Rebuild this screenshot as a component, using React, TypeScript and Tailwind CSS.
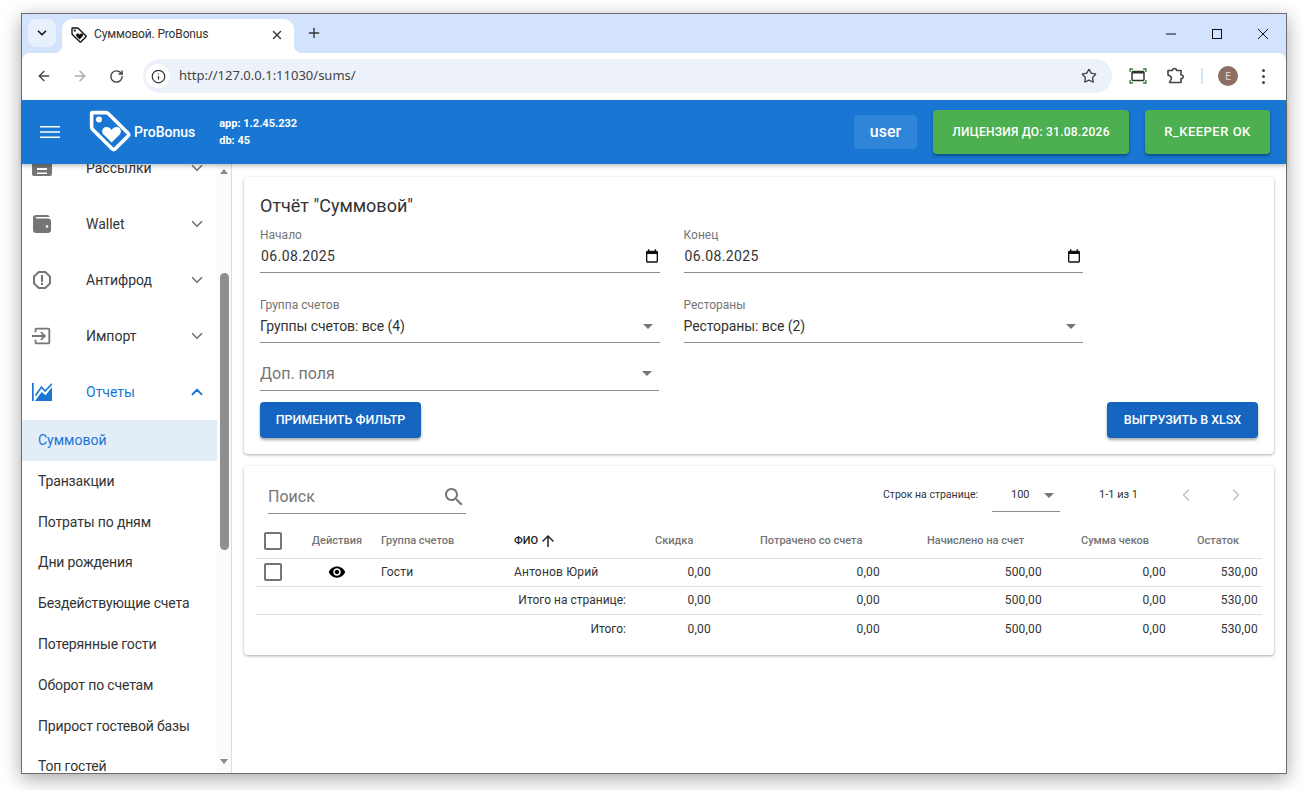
import React from "react";
import { ArrowLeft, ArrowRight, RotateCw, Info, Star, ChevronDown, ChevronUp, ChevronLeft, ChevronRight, Plus, X } from "lucide-react";

const TagLogo = ({ className }: { className: string }) => (
  <svg viewBox="0 0 40 40" className={className}>
    <path d="M2.5 3.5 Q2.5 2.5 3.5 2.5 L16 2.5 Q17.5 2.5 18.5 3.5 L37 22 Q38.5 23.5 37 25 L25 37 Q23.5 38.5 22 37 L3.5 18.5 Q2.5 17.5 2.5 16 Z" fill="none" stroke="currentColor" strokeWidth="3.4" strokeLinejoin="round" />
    <circle cx="9.5" cy="9" r="2.9" fill="currentColor" />
    <path d="M21.5 31 L13.8 23.3 C11.5 20.8 12.6 16.6 16.2 16.2 C18.4 16 20.4 17.2 21.5 19 C22.6 17.2 24.6 16 26.8 16.2 C30.4 16.6 31.5 20.8 29.2 23.3 Z" fill="currentColor" />
  </svg>
);

const Caret = ({ className = "" }: { className?: string }) => (
  <svg viewBox="0 0 10 5" className={`w-[10px] h-[5px] ${className}`}><path d="M0 0h10L5 5z" fill="#757575" /></svg>
);

const Calendar = () => (
  <svg viewBox="0 0 24 24" className="w-[16px] h-[16px] text-[#111]"><path fill="currentColor" d="M19 4h-1V2h-2v2H8V2H6v2H5c-1.1 0-2 .9-2 2v14c0 1.1.9 2 2 2h14c1.1 0 2-.9 2-2V6c0-1.1-.9-2-2-2zm0 16H5V9h14v11z" /></svg>
);

const NewsIcon = () => (
  <svg viewBox="0 0 20 20" className="w-[20px] h-[20px] text-[#757575]"><path fill="currentColor" fillRule="evenodd" d="M2 2h2V0h12v2h2a2 2 0 0 1 2 2v14a2 2 0 0 1-2 2H2a2 2 0 0 1-2-2V4a2 2 0 0 1 2-2zm3 10v2h10v-2zm0 4.5V18h10v-1.5z" /></svg>
);
const WalletIcon = () => (
  <svg viewBox="0 0 20 20" className="w-[20px] h-[20px] text-[#757575]"><path fill="currentColor" fillRule="evenodd" d="M4 1h11a3 3 0 0 1 2.8 2H4.5a.8.8 0 0 0 0 1.6H16a3 3 0 0 1 3 3V16a3 3 0 0 1-3 3H4a3 3 0 0 1-3-3V4a3 3 0 0 1 3-3zm11 10.2a1.3 1.3 0 1 0 0 2.6 1.3 1.3 0 0 0 0-2.6z" /></svg>
);
const FraudIcon = () => (
  <svg viewBox="0 0 24 24" className="w-[24px] h-[24px] text-[#757575]"><path fill="currentColor" d="M15.73 3H8.27L3 8.27v7.46L8.27 21h7.46L21 15.73V8.27L15.73 3zM19 14.9 14.9 19H9.1L5 14.9V9.1L9.1 5h5.8L19 9.1v5.8zM11 7h2v7h-2zM11 15h2v2h-2z" /></svg>
);
const ImportIcon = () => (
  <svg viewBox="0 0 24 24" className="w-[22px] h-[22px] -ml-[1px] text-[#757575]"><path fill="currentColor" d="M10.09 15.59 11.5 17l5-5-5-5-1.41 1.41L12.67 11H1v2h11.67l-2.58 2.59zM19 3H6c-1.11 0-2 .9-2 2v3h2V5h13v14H6v-3H4v3c0 1.1.89 2 2 2h13c1.1 0 2-.9 2-2V5c0-1.1-.9-2-2-2z" /></svg>
);
const ChartIcon = () => (
  <svg viewBox="0 0 20 18" className="w-[20px] h-[18px] text-[#1976d2]">
    <path fill="currentColor" d="M0 0h1.7v18H0zM3 18l6.7-9 4 3.3L20 4v14z" />
    <path fill="none" stroke="currentColor" strokeWidth="1.6" d="M3.5 12.5l6-8.5 3.6 4L20 .8" />
  </svg>
);

const TopItem = ({ icon, label, active }: { icon: React.ReactNode; label: string; active?: boolean }) => (
  <div className={`h-[56px] flex items-center pl-[8px] pr-[11px] text-[14px] ${active ? "text-[#1976d2]" : "text-[#333]"}`}>
    <div className="w-[24px] flex justify-center">{icon}</div>
    <div className="ml-[32px] flex-1">{label}</div>
    {active ? <ChevronUp size={18} strokeWidth={2.4} className="text-[#1976d2]" /> : <ChevronDown size={18} strokeWidth={2.2} className="text-[#757575]" />}
  </div>
);

const subs = ["Транзакции", "Потраты по дням", "Дни рождения", "Бездействующие счета", "Потерянные гости", "Оборот по счетам", "Прирост гостевой базы", "Топ гостей"];

const Field = ({ label, value, right, date }: { label: string; value: string; right: React.ReactNode; date?: boolean }) => (
  <div className="flex-1 h-[45px] border-b border-[#8c8c8c] flex flex-col">
    <div className="text-[12px] leading-[14px] text-[#757575]">{label}</div>
    <div className="flex items-center justify-between mt-[4px] text-[14px] leading-[20px] text-[#333]">
      <span className={date ? "ml-[1px] tracking-[0.4px]" : "tracking-[-0.08px]"}>{value}</span>
      {right}
    </div>
  </div>
);

const Check = () => <div className="w-[18px] h-[18px] border-2 border-[#757575] rounded-[2px] ml-[8px]" />;

const Num = ({ v }: { v: string }) => <td className="text-right pr-[4px] text-[12px] tracking-[0.2px] text-[#333]">{v}</td>;

const amounts = ["0,00", "0,00", "500,00", "0,00", "530,00"];

export default function App() {
  return (
    <div className="w-[1303px] h-[790px] bg-white overflow-hidden pl-[21px] pt-[13px]" style={{ fontFamily: "Roboto, 'Liberation Sans', sans-serif" }}>
      <div className="w-[1266px] h-[761px] border border-[#6e6e6e] shadow-[0_5px_18px_rgba(0,0,0,0.35)] flex flex-col bg-white">
        {/* tab strip */}
        <div className="h-[39px] bg-[#d3e3fd] flex items-end shrink-0 relative">
          <div className="w-[28px] h-[28px] mb-[6px] ml-[6px] bg-[#e9f0fd] rounded-[8px] flex items-center justify-center">
            <ChevronDown size={14} strokeWidth={3} className="text-[#1f1f1f]" />
          </div>
          <div className="w-[232px] h-[34px] ml-[6px] bg-white rounded-t-[10px] flex items-center pl-[9px] pr-[10px] relative">
            <span className="absolute left-[-8px] bottom-0 w-[8px] h-[8px] bg-[radial-gradient(circle_at_0_0,#d3e3fd_8px,#ffffff_8.5px)]" />
            <span className="absolute right-[-8px] bottom-0 w-[8px] h-[8px] bg-[radial-gradient(circle_at_100%_0,#d3e3fd_8px,#ffffff_8.5px)]" />
            <TagLogo className="w-[16px] h-[16px] text-[#111] shrink-0 -mt-[2px]" />
            <span className="ml-[7px] text-[12px] leading-[16px] text-[#333] tracking-[-0.15px] flex-1 -mt-[4px]">Суммовой. ProBonus</span>
            <X size={14} strokeWidth={2.4} className="text-[#333] -mt-[2px]" />
          </div>
          <Plus size={16} strokeWidth={2} className="text-[#333] ml-[12px] mb-[12px]" />
          <div className="ml-auto flex items-center h-full">
            <div className="w-[46px] flex justify-center">
              <svg viewBox="0 0 10 10" className="w-[10px] h-[10px]"><path d="M0 5h10" stroke="#111" strokeWidth="1" /></svg>
            </div>
            <div className="w-[46px] flex justify-center">
              <svg viewBox="0 0 10 10" className="w-[10px] h-[10px]"><rect x="0.5" y="0.5" width="9" height="9" fill="none" stroke="#111" strokeWidth="1" /></svg>
            </div>
            <div className="w-[46px] flex justify-center">
              <svg viewBox="0 0 10 10" className="w-[10px] h-[10px]"><path d="M0 0l10 10M10 0L0 10" stroke="#111" strokeWidth="1" /></svg>
            </div>
          </div>
        </div>
        {/* toolbar */}
        <div className="h-[47px] bg-[#d3e3fd] shrink-0">
          <div className="h-full bg-white rounded-t-[8px] flex items-center pb-[1px]">
            <ArrowLeft size={16} strokeWidth={2} className="text-[#444] ml-[14px]" />
            <ArrowRight size={16} strokeWidth={2} className="text-[#aaa] ml-[20px]" />
            <RotateCw size={15} strokeWidth={2.2} className="text-[#444] ml-[21px]" />
            <div className="w-[969px] h-[34px] bg-[#edf2fa] rounded-full ml-[19px] flex items-center pl-[3px] pr-[15px]">
              <div className="w-[24px] h-[24px] rounded-full bg-white flex items-center justify-center">
                <Info size={15} strokeWidth={2} className="text-[#333]" />
              </div>
              <span className="ml-[9px] text-[13px] text-[#444] flex-1" style={{ fontFamily: "'Noto Sans', sans-serif" }}>http://127.0.0.1:11030/sums/</span>
              <Star size={16} strokeWidth={2} className="text-[#444]" />
            </div>
            <svg viewBox="0 0 18 16" className="w-[18px] h-[16px] ml-[17px]">
              <path d="M1 4V1h3M14 1h3v3M1 12v3h3M14 15h3v-3" fill="none" stroke="#2e7d32" strokeWidth="1.3" />
              <rect x="3" y="3.5" width="12" height="9" rx="1" fill="none" stroke="#333" strokeWidth="1.5" />
              <path d="M3 4h12v1.5H3z" fill="#333" />
            </svg>
            <svg viewBox="0 0 18 18" className="w-[18px] h-[18px] ml-[19px]">
              <path d="M2 3.5h4.5a2 2 0 1 1 4 0H15v4.5a1.8 1.8 0 1 1 0 3.5V15.5H3.5L5 12.5a2.5 2.5 0 0 0-1-3.5L2 8z" fill="none" stroke="#444" strokeWidth="1.6" strokeLinejoin="round" />
            </svg>
            <div className="w-[2px] h-[16px] bg-[#d3e3fd] ml-[17px]" />
            <div className="w-[20px] h-[20px] rounded-full bg-[#8d6e63] ml-[15px] flex items-center justify-center text-[10px] text-[#e8dcd8]">E</div>
            <div className="ml-[24px] flex flex-col gap-[3px]">
              <div className="w-[3px] h-[3px] rounded-full bg-[#444]" />
              <div className="w-[3px] h-[3px] rounded-full bg-[#444]" />
              <div className="w-[3px] h-[3px] rounded-full bg-[#444]" />
            </div>
          </div>
        </div>
        {/* app bar */}
        <div className="h-[64px] bg-[#1976d2] shrink-0 flex items-center pl-[18px] pr-[16px] text-white relative z-10 shadow-[0_2px_4px_rgba(0,0,0,0.25)]">
          <svg viewBox="0 0 20 12" className="w-[20px] h-[12px]"><path fill="currentColor" d="M0 0h20v1.6H0zM0 5.2h20v1.6H0zM0 10.4h20V12H0z" /></svg>
          <TagLogo className="w-[42px] h-[42px] ml-[29px] -mt-[2px]" />
          <span className="ml-[3px] text-[14px] font-medium">ProBonus</span>
          <div className="ml-[24px] text-[11px] font-bold leading-[17px]">
            <div>app: 1.2.45.232</div>
            <div>db: 45</div>
          </div>
          <div className="ml-auto w-[63px] h-[34px] rounded-[4px] bg-[#348ada]/80 flex items-center justify-center text-[16px] font-medium">user</div>
          <div className="ml-[16px] w-[196px] h-[44px] rounded-[4px] bg-[#4caf50] shadow-[0_2px_3px_rgba(0,0,0,0.35)] flex items-center justify-center text-[12px] font-medium tracking-[0.25px]">ЛИЦЕНЗИЯ ДО: 31.08.2026</div>
          <div className="ml-[16px] w-[125px] h-[44px] rounded-[4px] bg-[#4caf50] shadow-[0_2px_3px_rgba(0,0,0,0.35)] flex items-center justify-center text-[13px] font-medium tracking-[0.5px]">R_KEEPER OK</div>
        </div>
        {/* body */}
        <div className="flex-1 flex min-h-0">
          {/* sidebar */}
          <div className="w-[210px] border-r border-[#dcdcdc] flex shrink-0 overflow-hidden">
            <div className="w-[195px] shrink-0 -mt-[24px]">
              <TopItem icon={<div className="-mt-[4px]"><NewsIcon /></div>} label="Рассылки" />
              <TopItem icon={<WalletIcon />} label="Wallet" />
              <TopItem icon={<FraudIcon />} label="Антифрод" />
              <TopItem icon={<ImportIcon />} label="Импорт" />
              <TopItem icon={<ChartIcon />} label="Отчеты" active />
              <div className="h-[41px] bg-[#e3edf8] flex items-center pl-[16px] text-[14px] text-[#1976d2]">Суммовой</div>
              {subs.map((s) => (
                <div key={s} className="h-[40.8px] flex items-center pl-[16px] text-[14px] tracking-[-0.15px] text-[#333]">{s}</div>
              ))}
            </div>
            <div className="w-[14px] bg-[#fbfbfb] flex flex-col items-center relative">
              <div className="mt-[5px] w-0 h-0 border-l-[4px] border-r-[4px] border-b-[5px] border-l-transparent border-r-transparent border-b-[#8a8a8a]" />
              <div className="mt-[99px] w-[9px] h-[277px] rounded-full bg-[#8f8f8f]" />
              <div className="mt-[209px] w-0 h-0 border-l-[4px] border-r-[4px] border-t-[5px] border-l-transparent border-r-transparent border-t-[#8a8a8a]" />
            </div>
          </div>
          {/* main */}
          <div className="flex-1 pl-[12px] pr-[12px] pt-[13px]">
            <div className="h-[277px] rounded-[4px] bg-white shadow-[0_1px_3px_rgba(0,0,0,0.35)] px-[16px] pt-[16px] flex flex-col">
              <div className="text-[18px] leading-[26px] text-[#333]">Отчёт "Суммовой"</div>
              <div className="flex gap-[24px] mt-[9px] w-[823px]">
                <Field date label="Начало" value="06.08.2025" right={<span><Calendar /></span>} />
                <Field date label="Конец" value="06.08.2025" right={<span className="mr-[1px]"><Calendar /></span>} />
              </div>
              <div className="flex gap-[24px] mt-[25px] w-[823px]">
                <Field label="Группа счетов" value="Группы счетов: все (4)" right={<Caret className="mr-[7px]" />} />
                <Field label="Рестораны" value="Рестораны: все (2)" right={<Caret className="mr-[7px]" />} />
              </div>
              <div className="w-[399px] h-[48px] border-b border-[#8c8c8c] flex items-center justify-between text-[16px] text-[#757575] pt-[14px]">
                <span>Доп. поля</span>
                <Caret className="mr-[7px]" />
              </div>
              <div className="flex justify-between mt-[11px]">
                <div className="w-[161px] h-[36px] rounded-[4px] bg-[#1565c0] text-white text-[12.5px] font-medium flex items-center justify-center shadow-[0_2px_3px_rgba(0,0,0,0.35)]">ПРИМЕНИТЬ ФИЛЬТР</div>
                <div className="w-[151px] h-[36px] rounded-[4px] bg-[#1565c0] text-white text-[12.5px] font-medium flex items-center justify-center shadow-[0_2px_3px_rgba(0,0,0,0.35)]">ВЫГРУЗИТЬ В XLSX</div>
              </div>
            </div>
            <div className="h-[189px] mt-[12px] rounded-[4px] bg-white shadow-[0_1px_3px_rgba(0,0,0,0.35)] px-[12px]">
              <div className="h-[58px] flex items-start">
                <div className="ml-[12px] mt-[14px] w-[198px] h-[34px] border-b border-[#8c8c8c] flex items-center justify-between text-[16px] text-[#757575]">
                  <span>Поиск</span>
                  <svg viewBox="0 0 24 24" className="w-[24px] h-[24px] text-[#757575]"><path fill="currentColor" d="M15.5 14h-.79l-.28-.27C15.41 12.59 16 11.11 16 9.5 16 5.91 13.09 3 9.5 3S3 5.91 3 9.5 5.91 16 9.5 16c1.61 0 3.09-.59 4.23-1.57l.27.28v.79l5 4.99L20.49 19l-4.99-5zm-6 0C7.01 14 5 11.99 5 9.5S7.01 5 9.5 5 14 7.01 14 9.5 11.99 14 9.5 14z" /></svg>
                </div>
                <div className="ml-[417px] mt-[22px] text-[10.5px] leading-[13px] text-[#333] w-[109px] whitespace-nowrap">Строк на странице:</div>
                <div className="w-[68px] h-[32px] border-b border-[#8c8c8c] mt-[14px] flex items-center text-[11px] text-[#333] pl-[19px]">
                  <span>100</span>
                  <Caret className="ml-[14px]" />
                </div>
                <div className="ml-[39px] mt-[22px] text-[11px] leading-[13px] text-[#333] w-[37px] whitespace-nowrap">1-1 из 1</div>
                <ChevronLeft size={20} strokeWidth={1.5} className="text-[#bdbdbd] ml-[40px] mt-[19px]" />
                <ChevronRight size={20} strokeWidth={1.5} className="text-[#bdbdbd] ml-[30px] mt-[19px]" />
              </div>
              <table className="w-[1006px] table-fixed border-collapse">
                <colgroup>
                  <col className="w-[45px]" /><col className="w-[72px]" /><col className="w-[137px]" /><col className="w-[120px]" />
                  <col className="w-[85px]" /><col className="w-[169px]" /><col className="w-[162px]" /><col className="w-[124px]" /><col className="w-[92px]" />
                </colgroup>
                <thead>
                  <tr className="h-[34px] border-b border-[#e0e0e0] text-[11px] text-[#757575]">
                    <th className="font-medium text-left"><Check /></th>
                    <th className="font-medium text-center">Действия</th>
                    <th className="font-medium text-left pl-[8px]">Группа счетов</th>
                    <th className="font-medium text-left pl-[4px] text-[#222]">
                      <span className="inline-flex items-center gap-[1px]">ФИО
                        <svg viewBox="0 0 24 24" className="w-[18px] h-[18px]"><path fill="currentColor" d="M4 12l1.41 1.41L11 7.83V20h2V7.83l5.58 5.59L20 12l-8-8-8 8z" /></svg>
                      </span>
                    </th>
                    <th className="font-medium text-left pl-[25px]">Скидка</th>
                    <th className="font-medium text-left pl-[45px]">Потрачено со счета</th>
                    <th className="font-medium text-left pl-[43px]">Начислено на счет</th>
                    <th className="font-medium text-left pl-[35px]">Сумма чеков</th>
                    <th className="font-medium text-left pl-[27px]">Остаток</th>
                  </tr>
                </thead>
                <tbody>
                  <tr className="h-[28px] border-b border-[#e0e0e0] text-[12px] text-[#333]">
                    <td><Check /></td>
                    <td><div className="flex justify-center"><svg viewBox="0 0 24 24" className="w-[18px] h-[18px] text-black"><path fill="currentColor" d="M12 4.5C7 4.5 2.73 7.61 1 12c1.73 4.39 6 7.5 11 7.5s9.27-3.11 11-7.5c-1.73-4.39-6-7.5-11-7.5zM12 17c-2.76 0-5-2.24-5-5s2.24-5 5-5 5 2.24 5 5-2.24 5-5 5zm0-8c-1.66 0-3 1.34-3 3s1.34 3 3 3 3-1.34 3-3-1.34-3-3-3z" /></svg></div></td>
                    <td className="pl-[8px] tracking-[0.2px]">Гости</td>
                    <td className="pl-[4px] tracking-[0.2px]">Антонов Юрий</td>
                    {amounts.map((a, i) => <Num key={i} v={a} />)}
                  </tr>
                  <tr className="h-[28px] border-b border-[#e0e0e0] text-[12px] text-[#333]">
                    <td colSpan={4} className="text-right pr-[4px]">Итого на странице:</td>
                    {amounts.map((a, i) => <Num key={i} v={a} />)}
                  </tr>
                  <tr className="h-[29px] text-[12px] text-[#333]">
                    <td colSpan={4} className="text-right pr-[4px]">Итого:</td>
                    {amounts.map((a, i) => <Num key={i} v={a} />)}
                  </tr>
                </tbody>
              </table>
            </div>
          </div>
        </div>
      </div>
    </div>
  );
}
